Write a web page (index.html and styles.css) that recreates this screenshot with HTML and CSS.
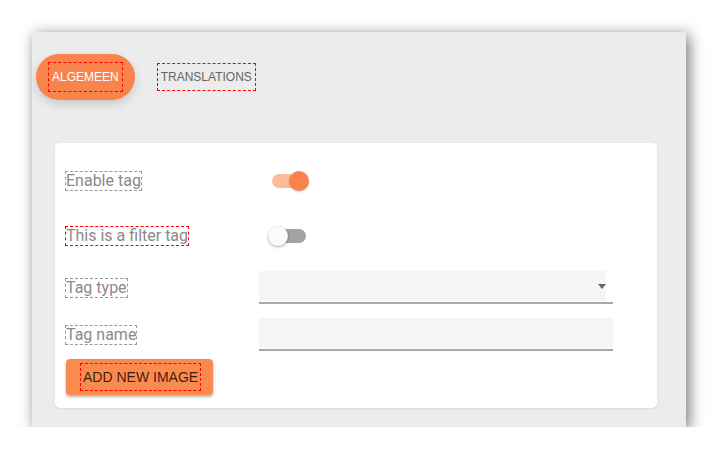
FILE: index.html
```html
<!DOCTYPE html>
<html lang="nl">

<head>
  <meta charset="UTF-8">
  <meta name="viewport" content="width=device-width, initial-scale=1">
  <title>Tag bewerken</title>
  <link rel="stylesheet" href="styles.css">
</head>

<body>

  <div class="panel">
    <div class="tabs">
      <div class="tab active"><span class="tab-label">ALGEMEEN</span></div>
      <div class="tab"><span class="tab-label">TRANSLATIONS</span></div>
    </div>

    <div class="card">
      <div class="row row-toggle">
        <span class="label">Enable tag</span>
        <div class="switch on"><span class="track"></span><span class="thumb"></span></div>
      </div>

      <div class="row row-toggle last-toggle">
        <span class="label marked">This is a filter tag</span>
        <div class="switch"><span class="track"></span><span class="thumb"></span></div>
      </div>

      <div class="row row-field">
        <span class="label">Tag type</span>
        <div class="field select"><span class="arrow"></span></div>
      </div>

      <div class="row row-field last-field">
        <span class="label">Tag name</span>
        <div class="field"></div>
      </div>

      <button class="btn"><span class="btn-label">ADD NEW IMAGE</span></button>
    </div>
  </div>

</body>

</html>
```

FILE: styles.css
```css
body {
  margin: 0;
  background: #fff;
  font-family: 'Liberation Sans', Arial, sans-serif;
}

.panel {
  margin: 32px 0 0 32px;
  width: 654px;
  height: 395px;
  background-color: #ececec;
  box-shadow: 3px 3px 14px rgba(0, 0, 0, 0.55);
  overflow: hidden;
}

/* Tabs */
.tabs {
  display: flex;
  gap: 10px;
  padding: 22px 4px 0 4px;
}

.tab {
  display: flex;
  align-items: center;
  justify-content: center;
  height: 46px;
  padding: 0 13px;
  border-radius: 23px;
  font-size: 12px;
  color: #666;
}

.tab.active {
  background-color: #f8844b;
  color: #fff;
  box-shadow: 0 4px 10px rgba(0, 0, 0, 0.15);
}

.tab-label {
  padding: 0 3px;
  line-height: 26px;
  outline: 1px dashed #f00;
}

.tab.active .tab-label {
  line-height: 28px;
}

/* Card */
.card {
  margin: 43px 29px 19px 23px;
  height: 265px;
  box-sizing: border-box;
  padding: 23px 11px 13px 11px;
  background-color: #fff;
  border-radius: 5px;
  box-shadow: 0 1px 2px rgba(0, 0, 0, 0.08);
}

.row {
  display: grid;
  grid-template-columns: 193px 354px;
  align-items: center;
}

.row-toggle {
  height: 30px;
  margin-bottom: 25px;
}

.row-toggle.last-toggle {
  margin-bottom: 20px;
}

.row-field {
  height: 33px;
  margin-bottom: 14px;
}

.row-field.last-field {
  margin-bottom: 8px;
}

.label {
  justify-self: start;
  font-family: Roboto, 'Liberation Sans', sans-serif;
  font-size: 16px;
  line-height: 18px;
  color: #8a8a8a;
  outline: 1px dashed #999;
}

.label.marked {
  outline-color: #f00;
}

/* Switch */
.switch {
  position: relative;
  width: 34px;
  height: 20px;
  margin-left: 13px;
}

.switch .track {
  position: absolute;
  left: 0;
  top: 3px;
  width: 34px;
  height: 14px;
  border-radius: 7px;
  background-color: #a3a3a3;
}

.switch .thumb {
  position: absolute;
  left: -4px;
  top: 0;
  width: 20px;
  height: 20px;
  border-radius: 50%;
  background-color: #fafafa;
  box-shadow: 0 1px 3px rgba(0, 0, 0, 0.35);
}

.switch.on .track {
  background-color: #fbbc9c;
}

.switch.on .thumb {
  left: 17px;
  background-color: #f8844b;
  box-shadow: 0 1px 2px rgba(0, 0, 0, 0.2);
}

/* Fields */
.field {
  height: 33px;
  box-sizing: border-box;
  padding-bottom: 1px;
  background-color: #f5f5f5;
  background-clip: content-box;
  border-bottom: 2px solid #a9a9a9;
}

.select {
  display: flex;
  align-items: center;
  justify-content: flex-end;
  padding-right: 7px;
}

.arrow {
  width: 0;
  height: 0;
  margin-top: 1px;
  border-left: 4.5px solid transparent;
  border-right: 4.5px solid transparent;
  border-top: 5px solid #666;
}

/* Button */
.btn {
  display: flex;
  align-items: center;
  width: 147px;
  height: 36px;
  padding: 0 0 0 15px;
  border: none;
  border-radius: 4px;
  background-color: #fb8a4e;
  box-shadow: 0 2px 3px rgba(0, 0, 0, 0.3);
  font-family: 'Liberation Sans', Arial, sans-serif;
  font-size: 14px;
  color: rgba(0, 0, 0, 0.78);
  cursor: pointer;
}

.btn-label {
  padding: 0 2px;
  line-height: 26px;
  outline: 1px dashed #f00;
}
```
